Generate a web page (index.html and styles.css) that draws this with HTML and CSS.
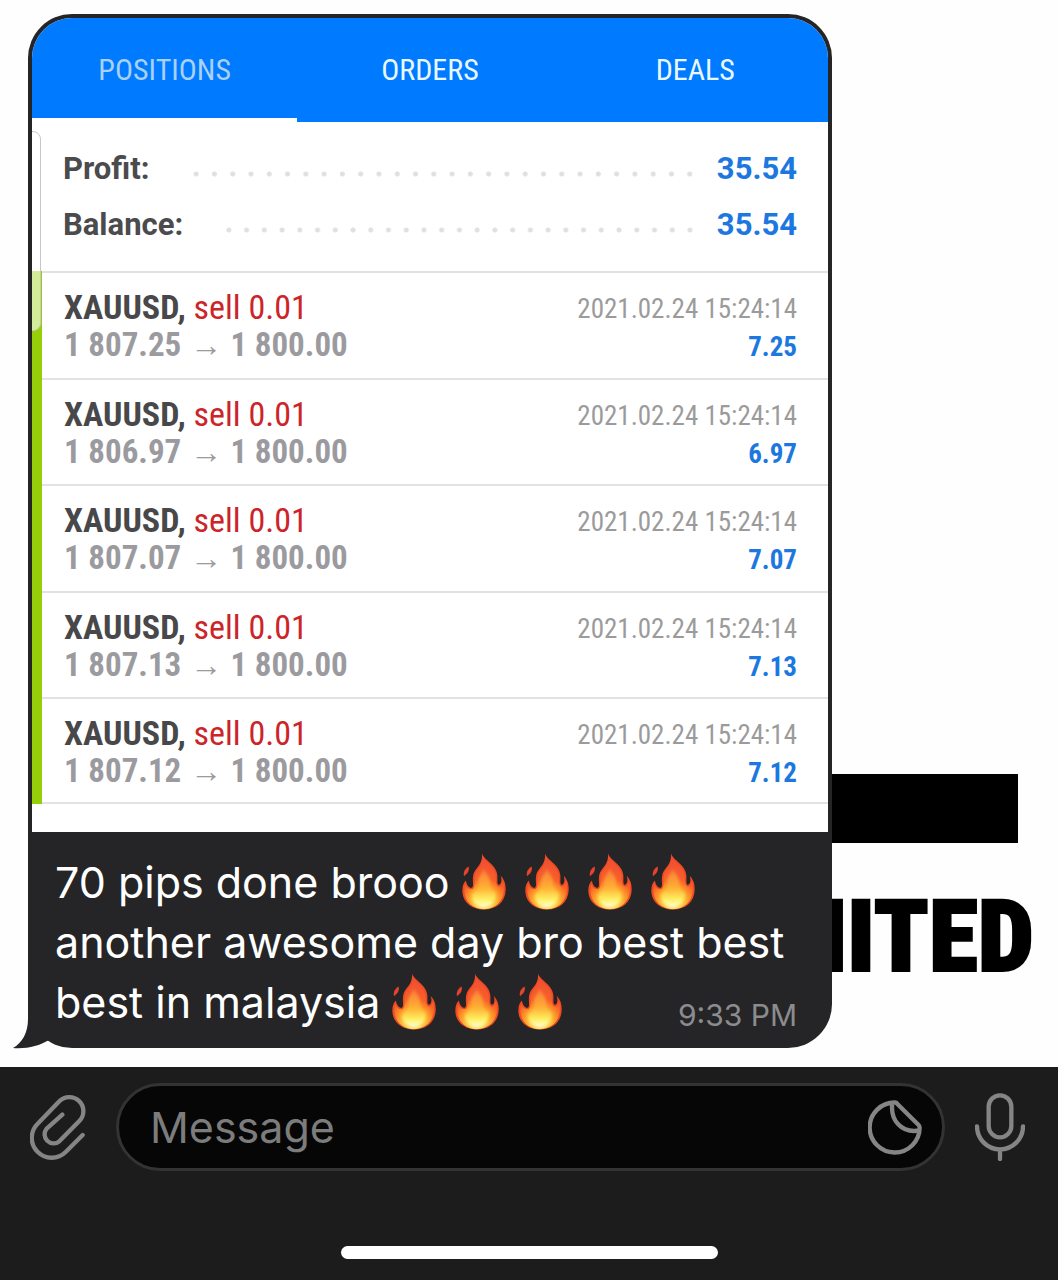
FILE: index.html
```html
<!DOCTYPE html>
<html lang="en">
<head>
<meta charset="utf-8">
<meta name="viewport" content="width=device-width, initial-scale=1">
<title>Chat</title>
<link rel="stylesheet" href="styles.css">
</head>
<body>
<svg class="defs" width="0" height="0" aria-hidden="true">
  <defs>
    <radialGradient id="flame-body" gradientUnits="userSpaceOnUse" cx="66" cy="146" r="140">
      <stop offset="0" stop-color="#fffbd0"/>
      <stop offset="0.16" stop-color="#ffe95a"/>
      <stop offset="0.34" stop-color="#ffa62a"/>
      <stop offset="0.5" stop-color="#f9622a"/>
      <stop offset="1" stop-color="#ee4a38"/>
    </radialGradient>
    <linearGradient id="flame-core" x1="0" y1="0" x2="0" y2="1">
      <stop offset="0" stop-color="#f97a38"/>
      <stop offset="0.5" stop-color="#ffb035"/>
      <stop offset="0.8" stop-color="#fff15e"/>
      <stop offset="1" stop-color="#fffde0"/>
    </linearGradient>
    <filter id="flame-soft" x="-20%" y="-20%" width="140%" height="140%"><feGaussianBlur stdDeviation="5"/></filter>
    <symbol id="fire" viewBox="0 0 132 170">
      <path fill="#e8432a" d="M20 40C9 46 3 57 6 69C15 62 23 55 20 40Z"/>
      <path fill="#f04a22" d="M60 0C64 20 104 34 106 66C107 82 104 94 111 95C119 92 120 80 116 68C128 80 132 96 131 112C129 146 105 169 66 169C28 169 1 146 1 112C1 98 5 88 12 82C13 94 20 105 30 104C37 96 29 80 35 60C42 42 63 34 60 0Z"/>
      <path fill="url(#flame-body)" d="M61 8C66 27 98 38 101 68C102 88 102 99 111 101C117 100 121 92 122 84C126 94 127 104 126 114C122 144 101 167 66 168C31 168 8 143 7 114C7 106 8 99 10 94C14 104 22 110 32 108C42 98 34 82 40 62C46 46 64 38 61 8Z" opacity=".9"/>
      <path fill="url(#flame-core)" filter="url(#flame-soft)" d="M66 46C70 62 84 66 84 88C84 104 90 116 98 116C104 122 102 158 66 162C32 158 26 130 34 120C48 116 50 104 48 86C48 68 62 60 66 46Z"/>
    </symbol>
  </defs>
</svg>

<main class="chat">
  <div class="wallpaper" aria-hidden="true">
    <div class="wallpaper-bar"></div>
    <div class="wallpaper-word">MITED</div>
  </div>

  <article class="bubble">
    <section class="trades">
      <nav class="tabs">
        <button class="tab tab-active" type="button">POSITIONS</button>
        <button class="tab" type="button">ORDERS</button>
        <button class="tab" type="button">DEALS</button>
      </nav>
      <dl class="summary">
        <div class="summary-row"><dt>Profit:</dt><dd class="dots"></dd><dd class="amount">35.54</dd></div>
        <div class="summary-row"><dt>Balance:</dt><dd class="dots"></dd><dd class="amount">35.54</dd></div>
      </dl>
      <ul class="positions">
        <li class="position">
          <div><p class="symbol">XAUUSD, <span class="sell">sell 0.01</span></p><p class="prices">1 807.25 <span class="arrow">→</span> 1 800.00</p></div>
          <div class="result"><time>2021.02.24 15:24:14</time><p class="gain">7.25</p></div>
        </li>
        <li class="position">
          <div><p class="symbol">XAUUSD, <span class="sell">sell 0.01</span></p><p class="prices">1 806.97 <span class="arrow">→</span> 1 800.00</p></div>
          <div class="result"><time>2021.02.24 15:24:14</time><p class="gain">6.97</p></div>
        </li>
        <li class="position">
          <div><p class="symbol">XAUUSD, <span class="sell">sell 0.01</span></p><p class="prices">1 807.07 <span class="arrow">→</span> 1 800.00</p></div>
          <div class="result"><time>2021.02.24 15:24:14</time><p class="gain">7.07</p></div>
        </li>
        <li class="position">
          <div><p class="symbol">XAUUSD, <span class="sell">sell 0.01</span></p><p class="prices">1 807.13 <span class="arrow">→</span> 1 800.00</p></div>
          <div class="result"><time>2021.02.24 15:24:14</time><p class="gain">7.13</p></div>
        </li>
        <li class="position">
          <div><p class="symbol">XAUUSD, <span class="sell">sell 0.01</span></p><p class="prices">1 807.12 <span class="arrow">→</span> 1 800.00</p></div>
          <div class="result"><time>2021.02.24 15:24:14</time><p class="gain">7.12</p></div>
        </li>
      </ul>
      <span class="scroll-thumb"></span>
    </section>

    <div class="caption">
      <p class="message">70 pips done brooo<svg class="fire"><use href="#fire"/></svg><svg class="fire"><use href="#fire"/></svg><svg class="fire"><use href="#fire"/></svg><svg class="fire"><use href="#fire"/></svg><br>another awesome day bro best best<br>best in malaysia<svg class="fire"><use href="#fire"/></svg><svg class="fire"><use href="#fire"/></svg><svg class="fire"><use href="#fire"/></svg></p>
      <time class="sent">9:33 PM</time>
    </div>
    <svg class="tail" viewBox="0 0 36 46" aria-hidden="true"><path d="M15 0V16C15 30 9 40 0 45C14 46 26 43 36 37V0Z"/></svg>
  </article>
</main>

<footer class="dock">
  <form class="composer">
    <button class="icon-button" type="button" aria-label="Attach">
      <svg class="clip" viewBox="0 0 168 196"><path d="M158 122L107 173A59 59 0 0 1 23 88L88 21A42 42 0 0 1 148 80L88 141A27 27 0 0 1 50 103L97 61"/></svg>
    </button>
    <div class="field">
      <input class="field-input" type="text" placeholder="Message" aria-label="Message">
      <button class="icon-button" type="button" aria-label="Stickers">
        <svg class="sticker" viewBox="0 0 162 164"><path d="M81 7A75 75 0 1 0 155 82Q155 78 151 74L89 12Q85 7 81 7ZM73 8C66 60 100 100 154 91"/></svg>
      </button>
    </div>
    <button class="icon-button" type="button" aria-label="Record">
      <svg class="mic" viewBox="0 0 150 204"><path d="M41 41A34 34 0 0 1 109 41V99A34 34 0 0 1 41 99ZM6 100A69 69 0 0 0 144 100M75 169V198"/></svg>
    </button>
  </form>
  <div class="home-bar"></div>
</footer>
</body>
</html>
```

FILE: styles.css
```css
* {
  box-sizing: border-box;
  margin: 0;
  padding: 0;
}

body {
  min-height: 100vh;
  display: flex;
  flex-direction: column;
  background: #fefefe;
  font-family: Inter, "Liberation Sans", sans-serif;
}

button {
  border: 0;
  background: none;
  font: inherit;
  color: inherit;
}

.defs {
  position: absolute;
}

/* Conversation */
.chat {
  position: relative;
  flex: 1;
  padding: 14px 28px 19px;
  overflow: hidden;
}

.wallpaper {
  position: absolute;
  right: 24px;
  bottom: 72px;
  display: flex;
  flex-direction: column;
  align-items: flex-end;
  gap: 36px;
}

.wallpaper-bar {
  width: 200px;
  height: 69px;
  margin-right: 16px;
  background: #000;
}

.wallpaper-word {
  font: 900 100px/116px "Roboto Condensed", "Liberation Sans Narrow", Roboto, sans-serif;
  -webkit-text-stroke: 2px #000;
  color: #000;
}

.bubble {
  position: relative;
  width: calc(100% - 198px);
  padding: 4px 4px 0;
  border-radius: 44px;
  background: #252527;
}

.tail {
  position: absolute;
  left: -15px;
  bottom: -1px;
  width: 36px;
  height: 46px;
  fill: #252527;
}

/* Trading screen */
.trades {
  position: relative;
  overflow: hidden;
  padding-bottom: 28px;
  border-radius: 40px 40px 0 0;
  background: #fff;
  font-family: "Roboto Condensed", "Liberation Sans Narrow", Roboto, sans-serif;
}

.tabs {
  display: grid;
  grid-template-columns: repeat(3, 1fr);
  height: 104px;
  background: #007aff;
  color: #e9f8ff;
  font-size: 30px;
}

.tab {
  padding-bottom: 2px;
}

.tab-active {
  box-shadow: inset 0 -4px #fff;
  color: #a9d0f5;
}

.summary {
  padding: 19px 31px 18px;
  font-family: Roboto, sans-serif;
  font-size: 31px;
  font-weight: 700;
  line-height: 56px;
  color: #4b4b4d;
}

.summary-row {
  display: flex;
  gap: 18px;
}

.dots {
  flex: 1;
  margin-left: 19px;
  background: radial-gradient(circle at 50% 33px, #e0e0e0 2px, transparent 3px) round;
  background-size: 18px 56px;
}

.amount {
  color: #1c78e0;
}

.positions {
  display: grid;
  grid-auto-rows: 1fr;
  min-height: 533px;
  border-left: 10px solid #96ce09;
  list-style: none;
}

.position {
  display: flex;
  justify-content: space-between;
  padding: 15px 31px 0 22px;
  border-top: 2px solid #e2e2e3;
  font-size: 34px;
  line-height: 38px;
}

.position:last-child {
  border-bottom: 2px solid #e2e2e3;
}

.symbol {
  font-weight: 700;
  color: #48484a;
}

.sell {
  font-weight: 400;
  color: #cc2429;
}

.prices {
  font-size: 33px;
  font-weight: 700;
  color: #9b9b9f;
}

.arrow {
  padding: 0 1px;
  font-size: 32px;
  line-height: 32px;
}

.result {
  padding-top: 2px;
  font-size: 27px;
  text-align: right;
  color: #9b9b9b;
}

.gain {
  font-weight: 700;
  color: #1c78e0;
}

.scroll-thumb {
  position: absolute;
  left: -10px;
  top: 113px;
  width: 19px;
  height: 200px;
  border: 1px solid #c8c8c8;
  border-radius: 8px;
  background: rgba(255, 255, 255, 0.6);
}

/* Caption */
.caption {
  display: flex;
  justify-content: space-between;
  align-items: flex-end;
  padding: 20px 31px 16px 23px;
}

.message {
  flex: 1;
  font-size: 43px;
  line-height: 60px;
  white-space: nowrap;
  color: #fff;
}

.fire {
  width: 44px;
  height: 57px;
  margin: 0 7px -12px 12px;
  vertical-align: baseline;
}

.sent {
  width: 0;
  display: flex;
  justify-content: flex-end;
  white-space: nowrap;
  font-size: 30px;
  line-height: 34px;
  color: #8c8c8e;
}

/* Composer */
.dock {
  display: flex;
  flex-direction: column;
  align-items: center;
  gap: 75px;
  padding: 16px 0 21px;
  background: #1c1c1c;
}

.composer {
  align-self: stretch;
  display: flex;
  align-items: center;
  gap: 30px;
  padding: 0 33px 0 30px;
}

.icon-button {
  display: flex;
}

.icon-button svg {
  fill: none;
  stroke: #858585;
  stroke-width: 13;
  stroke-linecap: round;
  stroke-linejoin: round;
}

.clip {
  width: 56px;
  height: 66px;
}

.sticker {
  width: 54px;
  height: 55px;
}

.mic {
  width: 50px;
  height: 68px;
}

.field {
  flex: 1;
  display: flex;
  align-items: center;
  height: 88px;
  padding: 0 20px 0 31px;
  border: 3px solid #333;
  border-radius: 44px;
  background: #060606;
}

.field-input {
  flex: 1;
  min-width: 0;
  height: 60px;
  border: 0;
  outline: 0;
  background: none;
  font: 43px/60px Inter, "Liberation Sans", sans-serif;
  color: #fff;
}

.field-input::placeholder {
  color: #7c7c7c;
  opacity: 1;
}

.home-bar {
  width: 377px;
  height: 13px;
  border-radius: 7px;
  background: #fff;
}
```
